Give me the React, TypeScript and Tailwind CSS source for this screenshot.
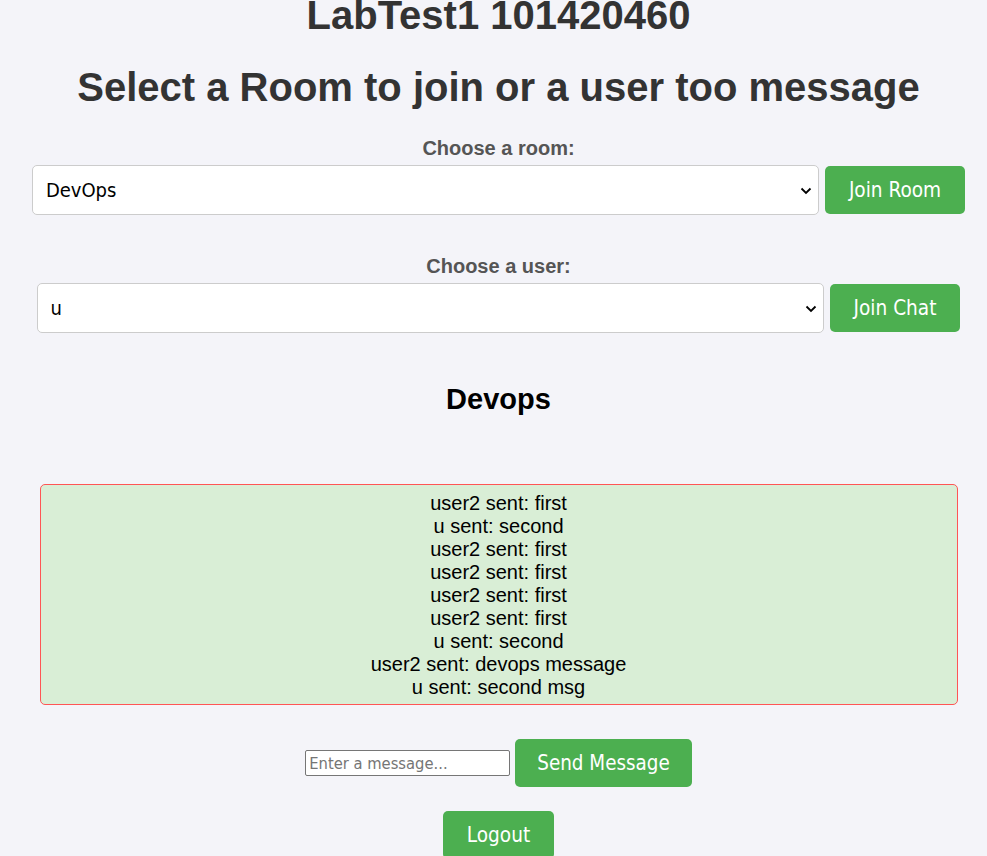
import React from "react";

const msgs = [
  "user2 sent: first",
  "u sent: second",
  "user2 sent: first",
  "user2 sent: first",
  "user2 sent: first",
  "user2 sent: first",
  "u sent: second",
  "user2 sent: devops message",
  "u sent: second msg",
];

function Select({ value }: { value: string }) {
  return (
    <div className="relative w-[787px] h-[50px]">
      <select
        defaultValue={value}
        className="appearance-none w-full h-full bg-white border border-[#cccccc] rounded-[5px] pl-[13px] pr-[30px] text-[20px] text-black font-['DejaVu_Sans_Condensed','DejaVu_Sans',sans-serif] outline-none"
      >
        <option value={value}>{value}</option>
      </select>
      <svg
        className="absolute right-[7px] top-[22px] pointer-events-none"
        width="12"
        height="8"
        viewBox="0 0 12 8"
      >
        <path d="M1.5 1.5 L6 6 L10.5 1.5" fill="none" stroke="#000" strokeWidth="1.8" />
      </svg>
    </div>
  );
}

function Btn({ children, narrow }: { children: React.ReactNode; narrow?: boolean }) {
  return (
    <button
      className={
        narrow
          ? "h-[48px] px-[22px] bg-[#4caf50] text-white rounded-[5px] text-[20.4px] font-['DejaVu_Sans_Condensed','DejaVu_Sans',sans-serif]"
          : "h-[48px] px-[24px] bg-[#4caf50] text-white rounded-[5px] text-[20.6px] font-['DejaVu_Sans_Condensed','DejaVu_Sans',sans-serif]"
      }
    >
      {children}
    </button>
  );
}

export default function App() {
  return (
    <div className="h-[856px] overflow-hidden bg-[#f4f4f9] pl-[10px] font-['Liberation_Sans',Arial,sans-serif]">
      <div className="flex flex-col items-center">
        <h1 className="mt-[-8px] text-[40px] leading-[46px] font-bold text-[#333]">
          LabTest1 101420460
        </h1>
        <h2 className="mt-[26px] text-[40px] leading-[46px] font-bold text-[#333]">
          Select a Room to join or a user too message
        </h2>
        <label className="mt-[27px] text-[20px] leading-[23px] font-bold text-[#555]">
          Choose a room:
        </label>
        <div className="mt-[5px] flex items-center gap-[6px]">
          <Select value="DevOps" />
          <Btn>Join Room</Btn>
        </div>
        <label className="mt-[40px] text-[20px] leading-[23px] font-bold text-[#555]">
          Choose a user:
        </label>
        <div className="mt-[5px] flex items-center gap-[6px]">
          <Select value="u" />
          <Btn>Join Chat</Btn>
        </div>
        <h3 className="mt-[50px] text-[29px] leading-[33px] font-bold text-black">Devops</h3>
        <div className="mt-[68px] w-[918px] bg-[#d9eed6] border border-[#ff5555] rounded-[5px] pt-[7px] pb-[5px] flex flex-col items-center">
          {msgs.map((m, i) => (
            <div key={i} className="text-[20px] leading-[23px] text-black">
              {m}
            </div>
          ))}
        </div>
        <div className="mt-[34px] flex items-center gap-[5px]">
          <input
            placeholder="Enter a message..."
            className="w-[205px] h-[26px] bg-white border border-[#767676] rounded-[2px] px-[3px] text-[16.4px] placeholder:text-[#757575] font-['DejaVu_Sans_Condensed','DejaVu_Sans',sans-serif] outline-none"
          />
          <Btn narrow>Send Message</Btn>
        </div>
        <div className="mt-[24px]">
          <Btn>Logout</Btn>
        </div>
      </div>
    </div>
  );
}
